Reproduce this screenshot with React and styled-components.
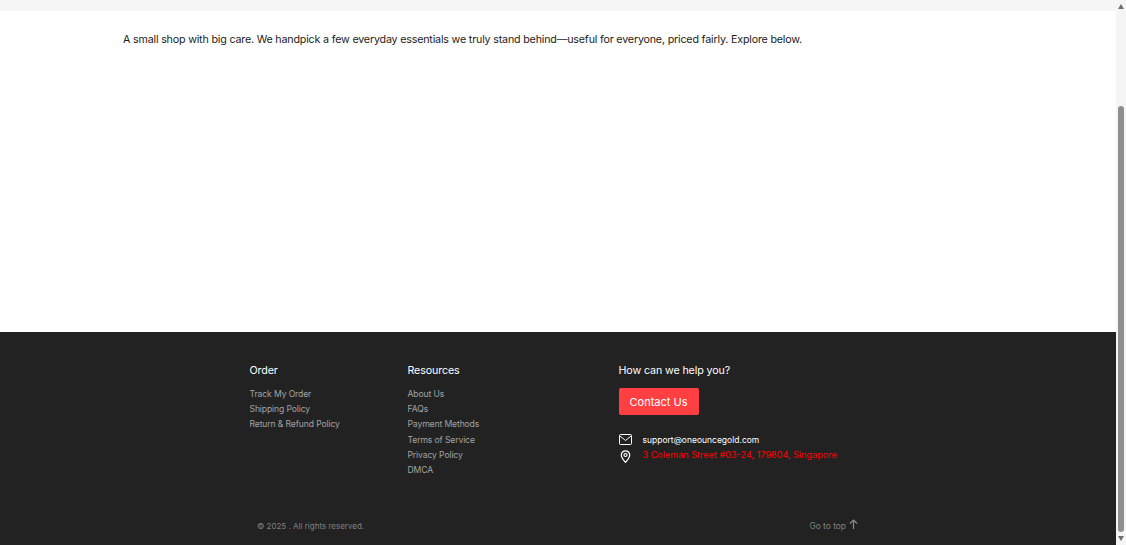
import styled, { createGlobalStyle } from 'styled-components';

const GlobalStyle = createGlobalStyle`
  html, body { margin: 0; padding: 0; height: 100%; overflow: hidden; background: #fff; }
  #root { height: 100%; }
  * { box-sizing: border-box; }
`;

const Screen = styled.div`
  display: flex;
  height: 545px;
  font-family: Inter, "Open Sans", "Liberation Sans", sans-serif;
`;

const Page = styled.div`
  flex: 1;
  display: flex;
  flex-direction: column;
  min-width: 0;
`;

const TopBand = styled.div`
  height: 11px;
  background: #f6f6f6;
`;

const Main = styled.main`
  height: 321px;
  padding: 21px 123px 0;
  background: #fff;
`;

const Intro = styled.p`
  margin: 0;
  font-size: 10.7px;
  letter-spacing: -0.18px;
  line-height: 16px;
  color: #1c1c1c;
  white-space: nowrap;
`;

const Footer = styled.footer`
  flex: 1;
  padding: 32px 258px 0 249.5px;
  background: #222222;
`;

const Columns = styled.div`
  display: grid;
  grid-template-columns: 158px 211px 1fr;
  height: 157px;
`;

const Heading = styled.h4`
  margin: 0 0 9px;
  font-size: 10.7px;
  font-weight: 400;
  letter-spacing: -0.12px;
  line-height: 14px;
  color: #fff;
`;

const LinkList = styled.ul`
  list-style: none;
  margin: 0;
  padding: 0;
  display: flex;
  flex-direction: column;
`;

const FooterLink = styled.a`
  display: block;
  font-size: 8.6px;
  letter-spacing: -0.12px;
  line-height: 15.2px;
  color: #a3a3a3;
  white-space: nowrap;
`;

const ContactButton = styled.button`
  display: block;
  width: 80px;
  height: 27px;
  margin-top: 10px;
  padding: 0;
  border: 0;
  border-radius: 2px;
  background: #ff3f42;
  color: #fff;
  font: inherit;
  font-size: 11px;
`;

const ContactRow = styled.div`
  display: flex;
  align-items: center;
  gap: 11px;
  height: 15px;
  margin-top: ${props => props.$top}px;
  font-size: ${props => props.$size}px;
  color: ${props => props.$color};
  white-space: nowrap;
`;

const IconSlot = styled.svg`
  flex: none;
  width: 13px;
  height: 13px;
  margin-top: ${props => props.$drop || 0}px;
  fill: none;
  stroke: #fff;
`;

const BottomRow = styled.div`
  display: flex;
  align-items: center;
  justify-content: space-between;
  padding-left: 7.5px;
  color: #808080;
`;

const Copyright = styled.span`
  font-size: 8px;
`;

const TopLink = styled.a`
  display: flex;
  align-items: center;
  gap: 3px;
  font-size: 8.5px;
  letter-spacing: -0.05px;
`;

const TopArrow = styled.svg`
  width: 9px;
  height: 10px;
  margin-top: -4px;
  fill: none;
  stroke: #8a8a8a;
  stroke-width: 1.2;
`;

const Scrollbar = styled.div`
  flex: none;
  width: 10px;
  display: flex;
  flex-direction: column;
  background: #f5f5f5;
`;

const ArrowBox = styled.div`
  height: 12px;
  display: flex;
  align-items: center;
  justify-content: center;
`;

const Arrow = styled.span`
  width: 0;
  height: 0;
  border-left: 3.5px solid transparent;
  border-right: 3.5px solid transparent;
  border-${props => (props.$down ? 'top' : 'bottom')}: 5px solid #6e6e6e;
`;

const Thumb = styled.div`
  width: 6px;
  height: 426px;
  margin: 94px auto 0;
  border-radius: 3px;
  background: #8f8f8f;
`;

const order = ['Track My Order', 'Shipping Policy', 'Return & Refund Policy'];
const resources = ['About Us', 'FAQs', 'Payment Methods', 'Terms of Service', 'Privacy Policy', 'DMCA'];

const App = () => {
  return (
    <Screen>
      <GlobalStyle />
      <Page>
        <TopBand />
        <Main>
          <Intro>A small shop with big care. We handpick a few everyday essentials we truly stand behind—useful for everyone, priced fairly. Explore below.</Intro>
        </Main>
        <Footer>
          <Columns>
            <div>
              <Heading>Order</Heading>
              <LinkList>
                {order.map(item => <li key={item}><FooterLink>{item}</FooterLink></li>)}
              </LinkList>
            </div>
            <div>
              <Heading>Resources</Heading>
              <LinkList>
                {resources.map(item => <li key={item}><FooterLink>{item}</FooterLink></li>)}
              </LinkList>
            </div>
            <div>
              <Heading>How can we help you?</Heading>
              <ContactButton>Contact Us</ContactButton>
              <ContactRow $top={17} $size={8.5} $color="#fff">
                <IconSlot viewBox="0 0 13 13">
                  <rect x="0.5" y="1.5" width="12" height="10" rx="1" />
                  <path d="M1 3l5.5 4.5L12 3" />
                </IconSlot>
                support@oneouncegold.com
              </ContactRow>
              <ContactRow $top={0} $size={9.1} $color="#ff0000">
                <IconSlot viewBox="0 0 13 13" $drop={4}>
                  <path d="M6.5 12.5C4.5 10 2.3 7.8 2.3 5a4.2 4.2 0 0 1 8.4 0c0 2.8-2.2 5-4.2 7.5z" strokeWidth="1.2" />
                  <circle cx="6.5" cy="5" r="1.5" strokeWidth="1.2" />
                </IconSlot>
                3 Coleman Street #03-24, 179804, Singapore
              </ContactRow>
            </div>
          </Columns>
          <BottomRow>
            <Copyright>© 2025 . All rights reserved.</Copyright>
            <TopLink>
              Go to top
              <TopArrow viewBox="0 0 9 10">
                <path d="M4.5 10V1M1 4.5L4.5 1 8 4.5" />
              </TopArrow>
            </TopLink>
          </BottomRow>
        </Footer>
      </Page>
      <Scrollbar>
        <ArrowBox><Arrow /></ArrowBox>
        <Thumb />
        <ArrowBox><Arrow $down /></ArrowBox>
      </Scrollbar>
    </Screen>
  );
};

export default App;
